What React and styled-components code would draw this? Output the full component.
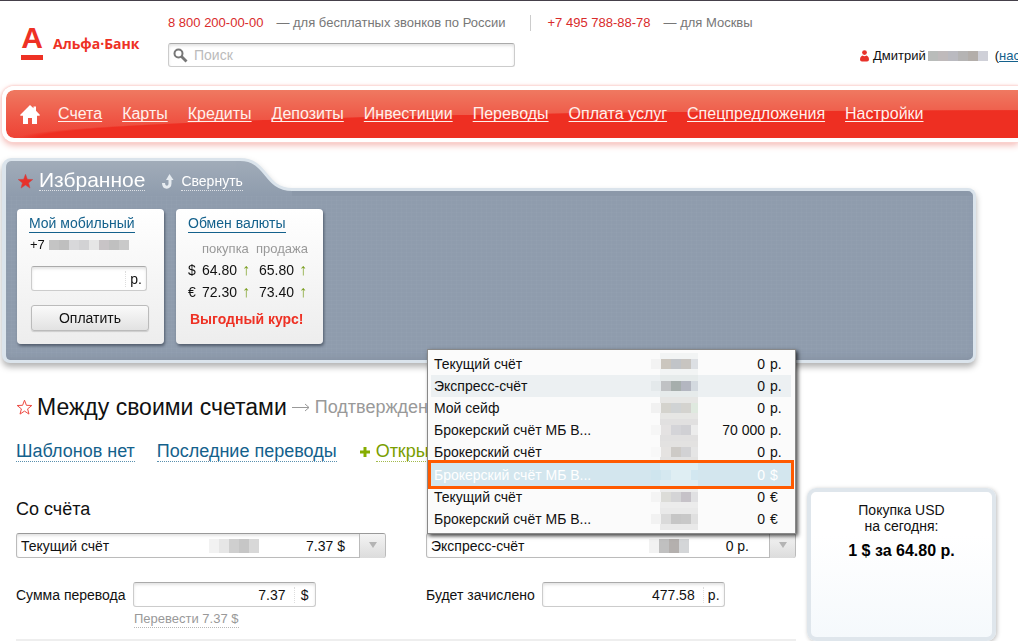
import React from 'react';
import styled, { createGlobalStyle } from 'styled-components';

const GlobalStyle = createGlobalStyle`
  * {
    box-sizing: border-box;
  }

  body {
    margin: 0;
    overflow: hidden;
    background: #fff;
    color: #111;
    font-family: "Liberation Sans", Arial, sans-serif;
    font-size: 14px;
    line-height: 16px;
  }

  h1, h2, p, ul {
    margin: 0;
    padding: 0;
    font-weight: normal;
    list-style: none;
  }

  a {
    color: inherit;
    text-decoration: none;
  }

  svg {
    flex-shrink: 0;
  }

  input, select, button {
    font: inherit;
    color: inherit;
  }
`;

const Page = styled.div`
  border-top: 1px solid #45404a;
  overflow: hidden;
`;

/* header */

const Header = styled.header`
  display: flex;
  height: 82px;
  padding: 14px 0 0 21px;
`;

const Logo = styled.a`
  display: flex;
  width: 147px;
  gap: 10px;
  color: #ee3124;
  font-weight: 700;
`;

const LogoMark = styled.span`
  width: 22px;
  height: 34px;
  margin-top: 11px;
  border-bottom: 5px solid #ee3124;
  font-size: 30px;
  line-height: 24px;
  text-align: center;
`;

const LogoName = styled.span`
  padding-top: 19px;
  font-family: "Open Sans", "Noto Sans", sans-serif;
  font-size: 14px;
  line-height: 20px;
`;

const Contacts = styled.div`
  flex: 1;
`;

const Phones = styled.ul`
  display: flex;
  font-size: 13px;
  color: #777;
`;

const Phone = styled.li`
  white-space: nowrap;

  & + & {
    margin-left: 24px;
    padding-left: 17px;
    border-left: 1px solid #ccc;
  }
`;

const PhoneNumber = styled.a`
  margin-right: 13px;
  color: #d92b2b;
`;

const Search = styled.label`
  display: flex;
  align-items: center;
  width: 347px;
  height: 24px;
  margin-top: 12px;
  padding-left: 4px;
  border: 1px solid #ccc;
  border-top-color: #aaa;
  border-radius: 3px;
  box-shadow: inset 0 2px 3px #e4e4e4;
`;

const SearchInput = styled.input`
  flex: 1;
  margin-left: 6px;
  padding: 0;
  border: 0;
  outline: 0;
  background: none;

  &::placeholder {
    color: #bbb;
  }
`;

const User = styled.div`
  display: flex;
  align-items: center;
  width: 158px;
  height: 16px;
  margin-top: 33px;
  overflow: hidden;
  white-space: nowrap;
  font-size: 13px;
`;

const UserName = styled.span`
  margin: 0 2px 0 4px;
`;

const Settings = styled.span`
  margin-left: 7px;

  a {
    color: #14618c;
    text-decoration: underline;
  }
`;

/* main menu */

const Nav = styled.nav`
  display: flex;
  align-items: center;
  gap: 20px;
  height: 56px;
  margin: 3px 0 0 2px;
  padding-left: 14px;
  border: 4px solid #fff;
  border-right: 0;
  border-radius: 12px 0 0 12px;
  background:
    radial-gradient(ellipse 1000px 28px at 100% 100%, #ee2f22 98%, transparent 100%) padding-box,
    linear-gradient(#ef7961, #ef5645 60%, #ee4335) padding-box;
  box-shadow: 0 0 2px 1px #fbd5d2, 0 3px 7px #f3b5b0;
`;

const NavLink = styled.a`
  color: #fff0ec;
  font-size: 16px;
  line-height: 18px;
  white-space: nowrap;
  text-decoration: underline;
  text-decoration-thickness: 1px;
  text-decoration-skip-ink: none;
  text-underline-offset: 2px;
`;

const HomeLink = styled.a`
  display: flex;
  margin-right: -2px;
`;

/* favourites */

const Favourites = styled.section`
  margin: 16px 42px 0 2px;
  filter: drop-shadow(0 4px 3px rgba(0, 0, 0, 0.3));
`;

const FavHead = styled.div`
  display: flex;
  align-items: flex-end;
`;

/* the last link runs over the curve, so the tab stays on top */
const FavTab = styled.div`
  position: relative;
  z-index: 1;
  display: flex;
  align-items: center;
  width: 234px;
  height: 38px;
  padding: 6px 0 0 11px;
  border: solid #dbe4ec;
  border-width: 3px 0 0 4px;
  border-top-left-radius: 9px;
  background: linear-gradient(#a1acb9, #8f9cad);
  color: #fff;
`;

const FavEdge = styled.div`
  flex: 1;
  height: 8px;
  border: solid #dbe4ec;
  border-width: 3px 3px 0 0;
  border-top-right-radius: 8px;
  background: #8b98a9;
`;

const FavBody = styled.div`
  display: flex;
  gap: 12px;
  padding: 13px 11px 16px;
  border: solid #dbe4ec;
  border-width: 0 3px 3px 4px;
  border-radius: 0 0 8px 8px;
  background:
    repeating-linear-gradient(90deg, rgba(255, 255, 255, 0.02) 0 1px, transparent 1px 5px),
    repeating-linear-gradient(rgba(255, 255, 255, 0.02) 0 1px, transparent 1px 4px),
    #8f9cad;
  box-shadow: inset 0 -5px 6px -3px #8692a3;
`;

const DottedLink = styled.a`
  padding-bottom: ${props => (props.$size > 14 ? 2 : 1)}px;
  border-bottom: 1px dotted color-mix(in srgb, currentColor 70%, transparent);
  font-size: ${props => props.$size || 14}px;
  color: ${props => props.$color || 'inherit'};
  white-space: nowrap;
`;

const Collapse = styled.span`
  display: flex;
  align-items: center;
  gap: 7px;
  margin-left: 17px;
`;

const FavTitle = styled.h2`
  display: flex;
  margin-left: 5px;
`;

const Card = styled.div`
  width: 147px;
  height: 135px;
  padding: 5px 12px;
  border-radius: 4px;
  background: linear-gradient(#fff, #ededed);
  box-shadow: 1px 2px 3px rgba(40, 50, 65, 0.6);
`;

const CardTitle = styled.a`
  display: inline-block;
  height: 19px;
  line-height: 18px;
  border-bottom: 1px solid #14618c;
  color: #14618c;
`;

const MobileNumber = styled.p`
  display: flex;
  align-items: center;
  gap: 4px;
  margin: 4px 0 13px 1px;
  font-size: 13px;
`;

const PayButton = styled.button`
  width: 118px;
  height: 26px;
  margin: 14px 0 0 2px;
  padding: 0;
  border: 1px solid #bbb;
  border-radius: 3px;
  background: linear-gradient(#fafafa, #e2e2e2);
  box-shadow: 0 1px 1px #ccc;
`;

const Rates = styled.table`
  width: 120px;
  margin-top: 6px;
  table-layout: fixed;
  border-collapse: collapse;

  th {
    height: 20px;
    padding: 0;
    color: #999;
    font-size: 13px;
    font-weight: normal;
    text-align: left;
  }

  td {
    height: 22px;
    padding: 0;
    white-space: nowrap;
  }

  td:last-child {
    padding-left: 3px;
  }

  th:first-child {
    width: 14px;
  }

  th:nth-child(2) {
    width: 54px;
  }
`;

const RateUp = styled.span`
  margin-left: 1px;
  color: #7a9e1e;
  font-size: 16px;
`;

const GoodRate = styled.p`
  padding: 8px 0 0 2px;
  color: #ee3124;
  font-weight: bold;
`;

/* transfer form */

const Main = styled.main`
  padding: 30px 22px 0 16px;
`;

const Title = styled.h1`
  display: flex;
  align-items: center;
  height: 28px;
  font-size: 23px;
  line-height: 28px;
  white-space: nowrap;

  > svg {
    margin-right: 4px;
  }
`;

const NextStep = styled.span`
  display: flex;
  align-items: center;
  gap: 5px;
  margin-left: 5px;
  color: #999;
  font-size: 18px;
`;

const Links = styled.div`
  display: flex;
  align-items: center;
  height: 24px;
  margin-top: 19px;
  gap: 22px;
`;

const OpenAccount = styled.span`
  display: flex;
  align-items: center;
  gap: 5px;
`;

const Columns = styled.div`
  display: flex;
  align-items: flex-start;
  gap: 11px;
  margin-top: 24px;
`;

const Form = styled.form`
  flex: 1;
  display: grid;
  grid-template-columns: 1fr 1fr;
  column-gap: 40px;
  padding-bottom: 11px;
  border-bottom: 2px solid #eee;
`;

const Side = styled.div`
  min-width: 0;
`;

const SideTitle = styled.h2`
  height: 45px;
  font-size: 18px;
  line-height: 42px;
`;

const Combo = styled.div`
  display: flex;
  align-items: center;
  height: 25px;
  border: 1px solid #bbb;
  border-top-color: #999;
  border-radius: 3px;
  box-shadow: inset 0 2px 3px #e4e4e4;
`;

const ComboSelect = styled.select`
  flex: 1;
  min-width: 0;
  height: 22px;
  padding: 0 0 0 4px;
  border: 0;
  outline: 0;
  background: none;
  appearance: none;
`;

const ComboSum = styled.span`
  width: ${props => props.$width}px;
  padding-right: ${props => props.$gap}px;
  text-align: right;
`;

const ComboArrow = styled.button`
  display: flex;
  align-items: center;
  justify-content: center;
  width: 26px;
  height: 24px;
  padding: 0;
  border: 0;
  border-left: 1px solid #bbb;
  border-radius: 0 2px 2px 0;
  background: linear-gradient(#f4f4f4, #dcdcdc);
`;

const Field = styled.div`
  display: flex;
  align-items: center;
  gap: 7px;
  margin-top: 24px;
`;

const MoneyBox = styled.div`
  display: flex;
  align-items: center;
  width: ${props => props.$width || 183}px;
  height: 25px;
  margin-left: ${props => (props.$width ? 2 : 0)}px;
  border: 1px solid #ccc;
  border-top-color: #aaa;
  border-radius: 3px;
  background: #fff;
  box-shadow: inset 0 2px 3px #e4e4e4;
`;

const MoneyInput = styled.input`
  flex: 1;
  min-width: 0;
  padding: 0 8px 0 0;
  border: 0;
  outline: 0;
  background: none;
  text-align: right;
`;

const Unit = styled.span`
  width: 21px;
  border-left: 1px dotted #ddd;
  text-align: center;
`;

const Hint = styled.div`
  margin-top: 2px;
  padding-left: 118px;
  line-height: 19px;
`;

/* list of accounts above the field */

const MenuAnchor = styled.div`
  position: relative;
  z-index: 1;
`;

const Menu = styled.ul`
  position: absolute;
  right: 0;
  bottom: calc(100% - 1px);
  width: 369px;
  padding: 3px 4px 3px 3px;
  border: 1px solid #888;
  background: #fbfbfb;
  box-shadow: 2px 2px 4px rgba(0, 0, 0, 0.7);
`;

const Option = styled.li`
  display: grid;
  grid-template-columns: 1fr 47px 67px 26px;
  align-items: center;
  height: 22px;
  padding-left: 3px;
  background: ${props => (props.$current ? '#ecf0f2' : 'none')};

  ${props => props.$picked && `
    height: 23px;
    background: #d3e6ee;
    color: #fff;
    outline: 3px solid #ff5a00;
  `}
`;

const Sum = styled.span`
  text-align: right;
`;

const Sign = styled.span`
  padding-left: 5px;
`;

const Blocks = styled.span`
  display: flex;
  height: ${props => props.$height || 10}px;
`;

const Block = styled.i`
  flex-shrink: 0;
  width: 10px;
  background: ${props => props.$color};
`;

const Veil = styled.span`
  display: flex;
  flex-direction: column;
  justify-content: center;
  height: 100%;
  overflow: hidden;
  background: linear-gradient(90deg, transparent 9px, ${props => props.$color} 9px);
`;

const RateBox = styled.aside`
  width: 189px;
  height: 153px;
  padding: 10px 8px;
  border: 4px solid #dfe6ec;
  border-radius: 9px;
  background: linear-gradient(#fff 30%, #f5f9fc);
  box-shadow: 1px 1px 4px #bbb;
  text-align: center;

  strong {
    display: block;
    margin-top: 8px;
    font-size: 16px;
    line-height: 18px;
    color: #000;
  }
`;

const nav = [
  'Счета',
  'Карты',
  'Кредиты',
  'Депозиты',
  'Инвестиции',
  'Переводы',
  'Оплата услуг',
  'Спецпредложения',
  'Настройки',
];

const accounts = [
  { name: 'Текущий счёт', sum: '0', sign: 'р.', veil: '#f2f4f4', blocks: ['#f3f3f3', '#cbc6be', '#c1c4c8', '#c8c5c1', '#dcdfe3'] },
  { name: 'Экспресс-счёт', sum: '0', sign: 'р.', veil: '#e6ebeb', blocks: ['#e4e9eb', '#c0c2c4', '#a6aeac', '#b3b6c0', '#d3d9df'], current: true },
  { name: 'Мой сейф', sum: '0', sign: 'р.', veil: '#e6e6e4', blocks: ['#f1f1f1', '#d4d3cd', '#d0d3d4', '#d4d3cf', '#dfe9df'] },
  { name: 'Брокерский счёт МБ В...', sum: '70 000', sign: 'р.', veil: '#e1e0e0', blocks: ['#f6f6f6', '#e4e2e2', '#d4d4d8', '#d0d0d4', '#ececec'] },
  { name: 'Брокерский счёт', sum: '0', sign: 'р.', veil: '#e3e2e1', blocks: ['#f8f8f8', '#e5e3e1', '#cdcac6', '#d2d2d4', '#e5e5e5'] },
  { name: 'Брокерский счёт МБ В...', sum: '0', sign: '$', veil: '#deedf2', blocks: ['#cfe5ee', '#d5e8f0', '#dfeef3', '#dfeef3', '#d2e7f0'], picked: true },
  { name: 'Текущий счёт', sum: '0', sign: '€', veil: '#ececec', blocks: ['#f4f4f4', '#dcdcd8', '#d4d4d6', '#c6c2c8', '#e0e0e2'] },
  { name: 'Брокерский счёт МБ В...', sum: '0', sign: '€', veil: '#e9e9e9', blocks: ['#f2f2f2', '#dadada', '#c6c6c6', '#c8c8c8', '#e0e0e0'] },
];

const Mosaic = ({ colors, height }) => (
  <Blocks $height={height}>
    {colors.map((color, i) => <Block key={i} $color={color} />)}
  </Blocks>
);

const Star = ({ filled }) => (
  <svg width="17" height="17" viewBox="0 0 17 17">
    <path
      d="M8.5 1.2l1.9 5.1 5.4.2-4.2 3.4 1.4 5.2-4.5-3-4.5 3 1.4-5.2L1.2 6.5l5.4-.2z"
      fill={filled ? '#e8312a' : '#fff'}
      stroke={filled ? '#c9474a' : '#ee4a42'}
      strokeWidth={filled ? 0.5 : 1}
    />
  </svg>
);

const Magnifier = () => (
  <svg width="15" height="15" viewBox="0 0 15 15" fill="none" stroke="#777">
    <circle cx="5.5" cy="5.5" r="4" strokeWidth="2" />
    <path d="M8.5 8.5l5 5" strokeWidth="2.8" />
  </svg>
);

const Person = () => (
  <svg width="9" height="12" viewBox="0 0 9 12" fill="#e8312a">
    <circle cx="4.5" cy="2.6" r="2.4" />
    <path d="M0 9.5C0 7 1.5 6 2.5 5.6Q4.5 6.8 6.5 5.6C7.5 6 9 7 9 9.5Q9 11.5 7 11.5H2Q0 11.5 0 9.5z" />
  </svg>
);

const Home = () => (
  <svg width="20" height="19" viewBox="0 0 20 19" fill="#fff">
    <path d="M10 0l3.5 3.3V1.5H16v4.2L20 10l-.6.8H17V19h-5v-6H8v6H3v-8.2H.6L0 10z" />
  </svg>
);

const TabCurve = () => (
  <svg width="56" height="38" viewBox="0 0 56 38">
    <defs>
      <linearGradient id="tab" x1="0" y1="0" x2="0" y2="1">
        <stop offset="0" stopColor="#a1acb9" />
        <stop offset="1" stopColor="#8f9cad" />
      </linearGradient>
    </defs>
    <path d="M0 1.5H4C32 1.5 28 31.5 56 31.5V38H0z" fill="url(#tab)" />
    <path d="M0 1.5H4C32 1.5 28 31.5 56 31.5" fill="none" stroke="#dbe4ec" strokeWidth="3" />
  </svg>
);

const CollapseIcon = () => (
  <svg width="12" height="15" viewBox="0 0 12 15">
    <path d="M1.5 9C1.5 14.5 8 14.5 8 9.5V5" fill="none" stroke="#e6ebf0" strokeWidth="3" />
    <path d="M4 6L7.5 0 11.5 6z" fill="#e6ebf0" />
  </svg>
);

const Arrow = () => (
  <svg width="18" height="9" viewBox="0 0 18 9" fill="none" stroke="#999">
    <path d="M0 4.5h17M13 1l4 3.5L13 8" />
  </svg>
);

const Plus = () => (
  <svg width="12" height="12" viewBox="0 0 12 12">
    <path d="M6 1v10M1 6h10" stroke="#86ad00" strokeWidth="3" />
  </svg>
);

const Triangle = () => (
  <svg width="8" height="7" viewBox="0 0 8 7">
    <path d="M0 0h8L4 6z" fill="#b4b4b4" />
  </svg>
);

const AccountCombo = ({ label, account, colors, sum, width, gap }) => (
  <Combo>
    <ComboSelect aria-label={label}>
      <option>{account}</option>
    </ComboSelect>
    <Mosaic colors={colors} height={14} />
    <ComboSum $width={width} $gap={gap}>{sum}</ComboSum>
    <ComboArrow type="button" aria-label="Открыть список"><Triangle /></ComboArrow>
  </Combo>
);

export default () => (
  <Page>
    <GlobalStyle />
    <Header>
      <Logo href="#">
        <LogoMark>А</LogoMark>
        <LogoName>Альфа·Банк</LogoName>
      </Logo>
      <Contacts>
        <Phones>
          <Phone>
            <PhoneNumber href="#">8 800 200-00-00</PhoneNumber>
            — для бесплатных звонков по России
          </Phone>
          <Phone>
            <PhoneNumber href="#">+7 495 788-88-78</PhoneNumber>
            — для Москвы
          </Phone>
        </Phones>
        <Search>
          <Magnifier />
          <SearchInput type="text" placeholder="Поиск" aria-label="Поиск" />
        </Search>
      </Contacts>
      <User>
        <Person />
        <UserName>Дмитрий</UserName>
        <Mosaic colors={['#b9bcba', '#bfbabb', '#babac0', '#b5b4b4', '#b3aeaa', '#cfd0d8']} />
        <Settings>(<a href="#">настройки</a>)</Settings>
      </User>
    </Header>

    <Nav>
      <HomeLink href="#" aria-label="Главная"><Home /></HomeLink>
      {nav.map(item => <NavLink key={item} href="#">{item}</NavLink>)}
    </Nav>

    <Favourites>
      <FavHead>
        <FavTab>
          <Star filled />
          <FavTitle><DottedLink href="#" $size={21}>Избранное</DottedLink></FavTitle>
          <Collapse>
            <CollapseIcon />
            <DottedLink href="#">Свернуть</DottedLink>
          </Collapse>
        </FavTab>
        <TabCurve />
        <FavEdge />
      </FavHead>
      <FavBody>
        <Card>
          <CardTitle href="#">Мой мобильный</CardTitle>
          <MobileNumber>
            +7
            <Mosaic colors={['#c4c4c4', '#bfbfbf', '#d8d8da', '#d2d2d4', '#e6e6e6', '#c8c4c6', '#c0c0c0', '#c9c9c9']} />
          </MobileNumber>
          <MoneyBox $width={116}>
            <MoneyInput type="text" aria-label="Сумма" />
            <Unit>р.</Unit>
          </MoneyBox>
          <PayButton type="button">Оплатить</PayButton>
        </Card>
        <Card>
          <CardTitle href="#">Обмен валюты</CardTitle>
          <Rates>
            <thead>
              <tr>
                <th aria-label="Валюта" />
                <th>покупка</th>
                <th>продажа</th>
              </tr>
            </thead>
            <tbody>
              <tr>
                <td>$</td>
                <td>64.80 <RateUp>↑</RateUp></td>
                <td>65.80 <RateUp>↑</RateUp></td>
              </tr>
              <tr>
                <td>€</td>
                <td>72.30 <RateUp>↑</RateUp></td>
                <td>73.40 <RateUp>↑</RateUp></td>
              </tr>
            </tbody>
          </Rates>
          <GoodRate>Выгодный курс!</GoodRate>
        </Card>
      </FavBody>
    </Favourites>

    <Main>
      <Title>
        <Star />
        Между своими счетами
        <NextStep><Arrow />Подтверждение</NextStep>
      </Title>
      <Links>
        <DottedLink href="#" $size={18} $color="#14618c">Шаблонов нет</DottedLink>
        <DottedLink href="#" $size={18} $color="#14618c">Последние переводы</DottedLink>
        <OpenAccount>
          <Plus />
          <DottedLink href="#" $size={18} $color="#7a9e00">Открыть</DottedLink>
        </OpenAccount>
      </Links>

      <Columns>
        <Form>
          <Side>
            <SideTitle>Со счёта</SideTitle>
            <AccountCombo
              label="Со счёта"
              account="Текущий счёт"
              colors={['#f2f2f2', '#e6e6e6', '#cfcfcf', '#c6c6c6', '#d8d8d8']}
              sum="7.37 $"
              width={100}
              gap={14}
            />
            <Field>
              <label htmlFor="amount">Сумма перевода</label>
              <MoneyBox>
                <MoneyInput id="amount" type="text" defaultValue="7.37" />
                <Unit>$</Unit>
              </MoneyBox>
            </Field>
            <Hint>
              <DottedLink href="#" $size={13} $color="#999">Перевести 7.37 $</DottedLink>
            </Hint>
          </Side>
          <Side>
            <SideTitle />
            <MenuAnchor>
              <Menu role="listbox">
                {accounts.map((account, i) => (
                  <Option key={i} role="option" $current={account.current} $picked={account.picked}>
                    <span>{account.name}</span>
                    <Veil $color={account.veil}><Mosaic colors={account.blocks} /></Veil>
                    <Sum>{account.sum}</Sum>
                    <Sign>{account.sign}</Sign>
                  </Option>
                ))}
              </Menu>
              <AccountCombo
                label="На счёт"
                account="Экспресс-счёт"
                colors={['#f2f2f2', '#c0c0c0', '#b4b0ae', '#d4d6d8']}
                sum="0 р."
                width={80}
                gap={20}
              />
            </MenuAnchor>
            <Field>
              <label htmlFor="credited">Будет зачислено</label>
              <MoneyBox>
                <MoneyInput id="credited" type="text" defaultValue="477.58" />
                <Unit>р.</Unit>
              </MoneyBox>
            </Field>
          </Side>
        </Form>
        <RateBox>
          <p>Покупка USD</p>
          <p>на сегодня:</p>
          <strong>1 $ за 64.80 р.</strong>
        </RateBox>
      </Columns>
    </Main>
  </Page>
);
